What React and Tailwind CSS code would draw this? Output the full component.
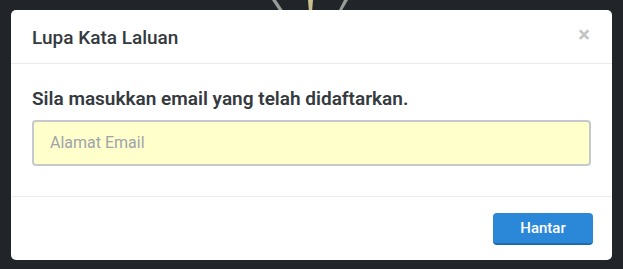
import React from "react";

export default function App() {
  return (
    <div
      className="relative w-[623px] h-[269px] overflow-hidden bg-[#212529] pt-[10px] pl-[11px]"
      style={{ fontFamily: "Roboto, 'Noto Sans', sans-serif" }}
    >
      <svg
        className="absolute left-0 top-0"
        width="623"
        height="12"
        viewBox="0 0 623 12"
      >
        <polygon points="272,0 276,0 284,12 280,12" fill="#9a9c98" />
        <polygon points="308,0 313,0 312,12 309,12" fill="#c9bf8f" />
        <polygon points="344,0 348,0 341,12 338,12" fill="#9a9c98" />
      </svg>
      <div className="relative flex h-[250px] w-[601px] flex-col rounded-[5px] bg-white">
        <div className="flex h-[54px] items-center justify-between border-b border-[#e9ecef] pl-[21px] pr-[22px]">
          <h5 className="text-[19px] font-medium leading-none text-[#343a40] pt-[2px]">
            Lupa Kata Laluan
          </h5>
          <span className="text-[22px] font-bold leading-none text-[#c4c4c4] pb-[4px]">
            ×
          </span>
        </div>
        <div className="flex h-[133px] flex-col border-b border-[#e9ecef] px-[21px] pt-[24px]">
          <p className="text-[19px] font-semibold leading-[22px] text-[#343a40]">
            Sila masukkan email yang telah didaftarkan.
          </p>
          <div className="mt-[10px] flex h-[46px] w-[559px] items-center rounded-[4px] border-2 border-[#c6c9cc] bg-[#ffffcc] pl-[16px]">
            <span className="text-[16px] text-[#9fa4aa]">Alamat Email</span>
          </div>
        </div>
        <div className="flex flex-1 justify-end pr-[19px] pt-[16px]">
          <button className="h-[32px] w-[100px] rounded-[4px] border-b-2 border-[#1e6bb0] bg-[#2b88d9] text-[15px] font-medium text-white">
            Hantar
          </button>
        </div>
      </div>
    </div>
  );
}
